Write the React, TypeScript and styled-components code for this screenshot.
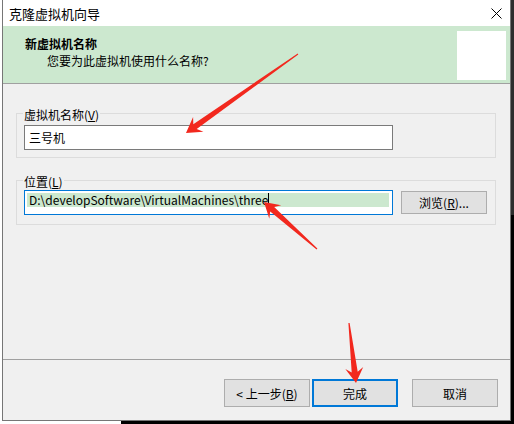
import { createGlobalStyle, styled } from 'styled-components';

const GlobalStyle = createGlobalStyle`
  html, body {
    margin: 0;
    padding: 0;
    background: #ffffff;
  }
  body {
    font-family: "Noto Sans CJK SC", "Noto Sans", sans-serif;
    font-size: 12px;
    color: #000;
  }
`;

const Screen = styled.div`
  position: relative;
  width: 514px;
  height: 424px;
  overflow: hidden;
  display: flex;
  flex-direction: column;
`;

const TopRow = styled.div`
  display: flex;
  height: 421px;
`;

const LeftGap = styled.div`
  width: 2px;
  background: #ffffff;
`;

const Shadow = styled.div`
  width: 3px;
  background: linear-gradient(to bottom, #2d2d2d 0, #2d2d2d 215px, #000 215px);
`;

const BottomRow = styled.div`
  display: flex;
  height: 3px;
`;

const BottomGap = styled.div<{ $w: number; $dark?: boolean }>`
  width: ${(p) => p.$w}px;
  background: ${(p) => (p.$dark ? '#000' : '#fff')};
`;

const Window = styled.div`
  width: 507px;
  border: 1px solid #767676;
  border-top: none;
  display: flex;
  flex-direction: column;
  background: #f0f0f0;
`;

const TitleBar = styled.div`
  height: 26px;
  background: #ffffff;
  display: flex;
  align-items: center;
  justify-content: space-between;
  padding: 0 8px 0 6px;
  font-size: 13px;
`;

const Header = styled.div`
  height: 57px;
  background: #cce8cf;
  border-bottom: 1px solid #a0a0a0;
  display: flex;
  justify-content: space-between;
  align-items: flex-start;
`;

const HeaderText = styled.div`
  padding: 10px 0 0 22px;
`;

const HeaderTitle = styled.div`
  font-weight: bold;
  line-height: 16px;
`;

const HeaderSub = styled.div`
  line-height: 16px;
  margin-top: 1px;
  padding-left: 22px;
`;

const HeaderIcon = styled.div`
  width: 49px;
  height: 49px;
  background: #ffffff;
  margin: 5px 4px 0 0;
`;

const Body = styled.div`
  flex: 1;
  padding-top: 19px;
  display: flex;
  flex-direction: column;
`;

const Group = styled.fieldset<{ $padTop: number; $padBottom: number; $gap?: number }>`
  margin: ${(p) => p.$gap ?? 0}px 14px 0 13px;
  padding: ${(p) => p.$padTop}px 7px ${(p) => p.$padBottom}px 7px;
  border: 1px solid #dcdcdc;
  min-width: 0;
`;

const Legend = styled.legend`
  padding: 4px 1px 0 1px;
  margin-left: -1px;
  line-height: 16px;
`;

const Row = styled.div`
  display: flex;
  align-items: center;
  gap: 8px;
`;

const TextBox = styled.div<{ $focused?: boolean }>`
  box-sizing: border-box;
  width: 369px;
  height: 25px;
  background: #ffffff;
  border: 1px solid ${(p) => (p.$focused ? '#0078d7' : '#7a7a7a')};
  display: flex;
  align-items: ${(p) => (p.$focused ? 'flex-start' : 'center')};
  padding: ${(p) => (p.$focused ? '2px 2px' : '0 4px')};
  white-space: nowrap;
`;

const Selection = styled.div`
  width: 362px;
  height: 14px;
  line-height: 14px;
  background: #cce8cf;
  display: flex;
  align-items: center;
  padding-left: 2px;
  box-sizing: border-box;
`;

const Caret = styled.span`
  display: inline-block;
  width: 1px;
  height: 14px;
  background: #000;
`;

const Footer = styled.div`
  border-top: 1px solid #a0a0a0;
  padding: 19px 12px 13px 0;
  display: flex;
  justify-content: flex-end;
  gap: 2px;
`;

const Button = styled.button<{ $w: number; $h: number; $default?: boolean; $spaced?: boolean }>`
  box-sizing: border-box;
  width: ${(p) => p.$w}px;
  height: ${(p) => p.$h}px;
  margin-left: ${(p) => (p.$spaced ? 12 : 0)}px;
  background: #e1e1e1;
  border: ${(p) => (p.$default ? '2px solid #0078d7' : '1px solid #adadad')};
  font-family: inherit;
  font-size: 12px;
  color: #000;
  padding: 0;
  display: flex;
  align-items: center;
  justify-content: center;
`;

const Overlay = styled.svg`
  position: absolute;
  left: 0;
  top: 0;
  pointer-events: none;
`;

type Pt = [number, number];

// tapered annotation arrow: thin tail, swept-back head
function arrowPoints(tail: Pt, tip: Pt): string {
  const dx = tip[0] - tail[0];
  const dy = tip[1] - tail[1];
  const len = Math.hypot(dx, dy);
  const ux = dx / len;
  const uy = dy / len;
  const nx = -uy;
  const ny = ux;
  const at = (d: number, w: number): string =>
    `${(tip[0] - ux * d + nx * w).toFixed(1)},${(tip[1] - uy * d + ny * w).toFixed(1)}`;
  return [
    at(len, 0.6),
    at(11, 3),
    at(15, 9),
    at(0, 0),
    at(15, -9),
    at(11, -3),
    at(len, -0.6),
  ].join(' ');
}

const arrows: { tail: Pt; tip: Pt }[] = [
  { tail: [298, 54], tip: [186, 133] },
  { tail: [317, 249], tip: [264, 202] },
  { tail: [349, 323], tip: [356, 383] },
];

export default function App() {
  return (
    <>
      <GlobalStyle />
      <Screen>
        <TopRow>
          <LeftGap />
          <Window>
            <TitleBar>
              <span>克隆虚拟机向导</span>
              <svg width="11" height="11" viewBox="0 0 11 11">
                <path d="M0.5 0.5 L10.5 10.5 M10.5 0.5 L0.5 10.5" stroke="#000" strokeWidth="1" />
              </svg>
            </TitleBar>
            <Header>
              <HeaderText>
                <HeaderTitle>新虚拟机名称</HeaderTitle>
                <HeaderSub>您要为此虚拟机使用什么名称?</HeaderSub>
              </HeaderText>
              <HeaderIcon />
            </Header>
            <Body>
              <Group $padTop={2} $padBottom={7}>
                <Legend>
                  虚拟机名称(<u>V</u>)
                </Legend>
                <TextBox>三号机</TextBox>
              </Group>
              <Group $padTop={0} $padBottom={9} $gap={12}>
                <Legend>
                  位置(<u>L</u>)
                </Legend>
                <Row>
                  <TextBox $focused>
                    <Selection>
                      D:\developSoftware\VirtualMachines\three
                      <Caret />
                    </Selection>
                  </TextBox>
                  <Button $w={86} $h={23}>
                    浏览(<u>R</u>)...
                  </Button>
                </Row>
              </Group>
            </Body>
            <Footer>
              <Button $w={86} $h={28}>
                &lt; 上一步(<u>B</u>)
              </Button>
              <Button $w={86} $h={28} $default>
                完成
              </Button>
              <Button $w={86} $h={28} $spaced>
                取消
              </Button>
            </Footer>
          </Window>
          <Shadow />
        </TopRow>
        <BottomRow>
          <BottomGap $w={121} />
          <BottomGap $w={393} $dark />
        </BottomRow>
        <Overlay width="514" height="424" viewBox="0 0 514 424">
          {arrows.map((a, i) => (
            <polygon key={i} points={arrowPoints(a.tail, a.tip)} fill="#f2281e" />
          ))}
        </Overlay>
      </Screen>
    </>
  );
}
